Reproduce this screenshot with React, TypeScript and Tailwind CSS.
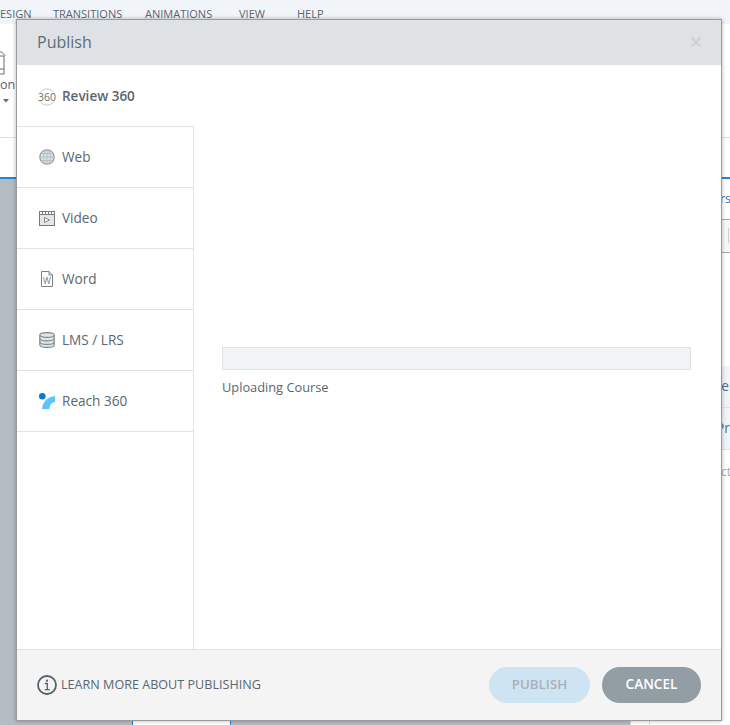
import React from 'react';

const font = "font-['Open_Sans','Noto_Sans',sans-serif]";

const Icon360 = () => (
  <svg width="18" height="18" viewBox="0 0 18 18" fill="none">
    <path d="M1.8 5A8.4 8.4 0 0 1 16.2 5" stroke="#c3cbcf" strokeWidth="1" />
    <path d="M1.8 13A8.4 8.4 0 0 0 16.2 13" stroke="#c3cbcf" strokeWidth="1" />
    <text x="9" y="12.8" textAnchor="middle" fontSize="10.5" fill="#6f6f6f" fontFamily="'Open Sans',sans-serif">360</text>
  </svg>
);

const IconWeb = () => (
  <svg width="16" height="16" viewBox="0 0 16 16" fill="none">
    <circle cx="8" cy="8" r="7.2" fill="#d9e3e7" stroke="#989fa1" strokeWidth="1.3" />
    <ellipse cx="8" cy="8" rx="3.4" ry="7" stroke="#b0b8bb" strokeWidth="0.8" />
    <path d="M8 1v14M1 8h14M2 4.5h12M2 11.5h12" stroke="#b0b8bb" strokeWidth="0.8" />
  </svg>
);

const IconVideo = () => (
  <svg width="16" height="15" viewBox="0 0 16 15" fill="none">
    <rect x="0.5" y="0.5" width="15" height="14" fill="#e0e7e9" stroke="#7a7a7a" />
    <rect x="0.5" y="0.5" width="15" height="3" fill="#fff" stroke="#7a7a7a" />
    <path d="M3.5 1v2M6.5 1v2M9.5 1v2M12.5 1v2" stroke="#7a7a7a" />
    <path d="M5.5 6.5l5 2.5-5 2.5z" fill="#fff" stroke="#7a7a7a" strokeWidth="0.9" />
  </svg>
);

const IconWord = () => (
  <svg width="14" height="16" viewBox="0 0 14 16" fill="none">
    <path d="M1.5 0.5H9L12.5 4V15.5H1.5Z" fill="#fff" stroke="#7f7f7f" />
    <path d="M9 0.5V4H12.5" stroke="#7f7f7f" />
    <text x="7" y="12.8" textAnchor="middle" fontSize="8.5" fill="#777" fontFamily="'Open Sans',sans-serif">W</text>
  </svg>
);

const IconDb = () => (
  <svg width="16" height="16" viewBox="0 0 16 16" fill="none">
    <path d="M0.8 3v10c0 1.4 3.2 2.4 7.2 2.4s7.2-1 7.2-2.4V3" fill="#dfe5e8" stroke="#7f8688" strokeWidth="1.1" />
    <ellipse cx="8" cy="3" rx="7.2" ry="2.4" fill="#dfe5e8" stroke="#7f8688" strokeWidth="1.1" />
    <path d="M0.8 6.5c0 1.4 3.2 2.4 7.2 2.4s7.2-1 7.2-2.4M0.8 10c0 1.4 3.2 2.4 7.2 2.4s7.2-1 7.2-2.4" stroke="#7f8688" strokeWidth="1.1" />
  </svg>
);

const IconReach = () => (
  <svg width="16" height="16" viewBox="0 0 16 16" fill="none">
    <circle cx="3.3" cy="3.3" r="3.3" fill="#0a78d7" />
    <path d="M3 16C3.5 9 9 3.5 16 3V9C12.5 9.5 10.5 12 10.5 16Z" fill="#5cc3fb" />
  </svg>
);

const items = [
  { label: 'Web', icon: <IconWeb /> },
  { label: 'Video', icon: <IconVideo /> },
  { label: 'Word', icon: <IconWord /> },
  { label: 'LMS / LRS', icon: <IconDb /> },
  { label: 'Reach 360', icon: <IconReach /> },
];

const SideRow: React.FC<{ label: string; icon: React.ReactNode }> = ({ label, icon }) => (
  <div className="flex h-[61px] items-center border-b border-[#dfe3e6] pl-[22px]">
    <div className="flex w-4 justify-center">{icon}</div>
    <span className="ml-[7px] text-[13.6px] text-[#5a6670]">{label}</span>
  </div>
);

export default function App() {
  return (
    <div className={`relative h-[725px] w-[730px] overflow-hidden bg-white ${font}`}>
      {/* app behind the dialog */}
      <div className="flex h-[24px] bg-[#f1f4f8] pt-[7px] text-[11px] leading-[14px] text-[#5a6670]">
        <span className="w-[53px]">ESIGN</span>
        <span className="w-[92px]">TRANSITIONS</span>
        <span className="w-[94px]">ANIMATIONS</span>
        <span className="w-[58px]">VIEW</span>
        <span>HELP</span>
      </div>
      <div className="h-[114px] border-b border-[#dcdfe2] pt-[26px]">
        <svg width="6" height="25" viewBox="0 0 6 25" fill="none" className="block">
          <path d="M-3 6L1 1.5L5.5 6M0 6H4V19H0M4 19V24H-1" stroke="#6b6b6b" strokeWidth="1" />
        </svg>
        <div className="mt-[1px] text-[12.5px] leading-[18px] text-[#5a6670]">on</div>
        <svg width="6" height="4" viewBox="0 0 6 4" className="ml-[3px] mt-[5px] block">
          <path d="M0 0H6L3 3.5Z" fill="#6b6b6b" />
        </svg>
      </div>
      <div className="h-[41px] border-b-2 border-[#1f86d8]" />
      <div className="flex h-[546px]">
        <div className="w-[132px] bg-[#b5bbc2]" />
        <div className="w-[99px] border-x border-[#1f86d8] bg-white" />
        <div className="w-[399px] bg-[#b5bbc2]" />
        <div className="w-[20px] border-x border-[#d8dbde] bg-white" />
        <div className="w-[80px] bg-white pl-[71px] text-[13.6px] text-[#3f6f9f]">
          <div className="-ml-[71px] flex h-[41px] items-center border-b border-[#aaaaaa] pl-[70px] text-[12.5px]">rs</div>
          <div className="-ml-[71px] h-[33px] border-b border-[#aaaaaa] bg-[#f6f6f6] pl-[78px] pt-[8px]">
            <div className="h-[15px] w-px bg-[#cfcfcf]" />
          </div>
          <div className="h-[113px]" />
          <div className="-ml-[71px] flex h-[42px] items-center border-b border-[#e1e5e8] bg-[#f0f4f8] pl-[63px]">ne</div>
          <div className="-ml-[71px] flex h-[42px] items-center border-b border-[#e1e5e8] bg-[#f0f4f8] pl-[66px]">Pr</div>
          <div className="mt-[13px] text-[12px] leading-[18px] text-[#a9a9a9]">ct</div>
        </div>
      </div>

      {/* dialog */}
      <div className="absolute left-[16px] top-[19px] flex h-[702px] w-[706px] flex-col border border-[#9b9b9b] bg-white shadow-[0_0_4px_rgba(0,0,0,0.3)]">
        <div className="flex h-[45px] shrink-0 items-center justify-between bg-[#dee2e5] pb-[2px] pl-[20px] pr-[20px]">
          <span className="text-[16px] text-[#5f6c75]">Publish</span>
          <svg width="10" height="10" viewBox="0 0 10 10" fill="none">
            <path d="M0.5 0.5L9.5 9.5M9.5 0.5L0.5 9.5" stroke="#cbcfd2" strokeWidth="1.6" />
          </svg>
        </div>
        <div className="flex min-h-0 flex-1">
          <div className="w-[177px] border-r border-[#dfe3e6]">
            <div className="-mr-px flex h-[62px] items-center border-b border-[#dfe3e6] bg-white pl-[21px] pt-[2px]">
              <Icon360 />
              <span className="ml-[6px] text-[13.5px] font-semibold text-[#5a6670]">Review 360</span>
            </div>
            {items.map(item => (
              <SideRow key={item.label} label={item.label} icon={item.icon} />
            ))}
          </div>
          <div className="flex flex-1 flex-col justify-center pl-[28px] pr-[30px] pt-[31px]">
            <div className="h-[23px] border border-[#dfe3e6] bg-[#f0f4f7]" />
            <div className="mt-[8px] text-[12.8px] text-[#5a6670]">Uploading Course</div>
          </div>
        </div>
        <div className="flex h-[71px] shrink-0 items-center justify-between border-t border-[#dfe3e6] bg-[#f4f4f4] pl-[20px] pr-[20px]">
          <div className="flex items-center">
            <svg width="20" height="20" viewBox="0 0 20 20" fill="none">
              <circle cx="10" cy="10" r="9" stroke="#55626a" strokeWidth="1.8" />
              <path d="M8 8.5h2.3v6M7.8 14.7h5" stroke="#55626a" strokeWidth="1.3" />
              <circle cx="10" cy="5.7" r="1.1" fill="#55626a" />
            </svg>
            <span className="ml-[4px] mt-px text-[12.6px] text-[#5a6670]">LEARN MORE ABOUT PUBLISHING</span>
          </div>
          <div className="flex items-center gap-[12px]">
            <div className="flex h-[36px] w-[101px] items-center justify-center rounded-full bg-[#cfe4f3] pb-px text-[13.3px] font-semibold text-[#a9b0b5]">PUBLISH</div>
            <div className="flex h-[36px] w-[99px] items-center justify-center rounded-full bg-[#939da4] pb-px text-[13.6px] font-semibold text-white">CANCEL</div>
          </div>
        </div>
      </div>
    </div>
  );
}
